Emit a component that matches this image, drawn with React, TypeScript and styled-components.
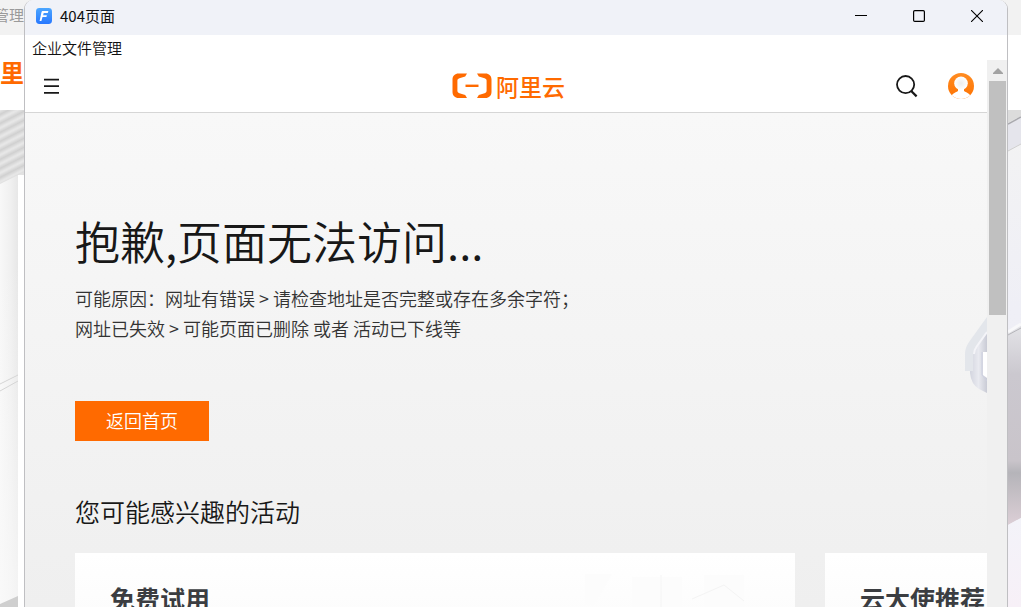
import React from "react";
import styled, { createGlobalStyle } from "styled-components";

const Global = createGlobalStyle`
  * { box-sizing: border-box; }
  body {
    margin: 0;
    background: #f2f2f2;
    font-family: "Noto Sans CJK SC", "Noto Sans", sans-serif;
    color: #181818;
  }
  button { font-family: inherit; border: 0; padding: 0; background: none; cursor: pointer; }
  h1, h2, h3, p { margin: 0; }
  svg { display: block; }
`;

const Desktop = styled.div`
  display: grid;
  grid-template-columns: 24px minmax(0, 1fr) 13px;
  height: 100vh;
  overflow: hidden;
`;

const Backdrop = styled.aside`
  display: flex;
  flex-direction: column;
  min-width: 0;
  overflow: hidden;
`;

const BackdropBar = styled.div`
  display: flex;
  justify-content: flex-end;
  flex: 0 0 35px;
  line-height: 30px;
  font-size: 15px;
  color: #9a9a9a;
  white-space: nowrap;
`;

const BackdropHeader = styled.div`
  display: flex;
  justify-content: flex-end;
  flex: 0 0 75px;
  background: #fff;
  color: #ff6a00;
  font-size: 24px;
  font-weight: 700;
  line-height: 74px;
  white-space: nowrap;
`;

const BackdropArt = styled.svg`
  flex: 0 0 auto;
`;

const Window = styled.section`
  display: flex;
  flex-direction: column;
  min-width: 0;
  overflow: hidden;
  background: #fff;
  border: solid #bfbfc2;
  border-width: 0 1px;
  border-radius: 9px 9px 0 0;
`;

const TitleBar = styled.header`
  display: flex;
  align-items: center;
  flex: 0 0 35px;
  padding: 0 1px 4px 11px;
  gap: 8px;
  background: #f0f2f8;
  font-size: 15px;
  line-height: 20px;
  color: #111;
`;

const WindowTitle = styled.span`
  flex: 1;
`;

const WindowControls = styled.div`
  display: flex;
`;

const WindowButton = styled.button`
  display: grid;
  place-items: center;
  width: 58px;
  height: 31px;
`;

const MenuBar = styled.nav`
  flex: 0 0 25px;
  padding-left: 7px;
  display: flex;
`;

const MenuItem = styled.button`
  font-size: 15px;
  font-weight: 350;
  line-height: 25px;
  color: #111;
`;

const Viewport = styled.div`
  display: flex;
  flex: 1;
  min-height: 0;
`;

const Page = styled.main`
  flex: 1;
  min-width: 0;
  overflow: hidden;
  display: flex;
  flex-direction: column;
`;

const SiteHeader = styled.header`
  display: grid;
  grid-template-columns: 1fr auto 1fr;
  align-items: center;
  flex: 0 0 53px;
  padding: 0 13px 0 18px;
  border-bottom: 1px solid #d6d6d6;
  background: #fff;
`;

const IconButton = styled.button`
  display: block;
`;

const Logo = styled.a`
  display: flex;
  align-items: center;
  gap: 4px;
  color: #ff6a00;
  text-decoration: none;
  font-size: 23px;
  font-weight: 500;
  line-height: 50px;
`;

const HeaderActions = styled.div`
  display: flex;
  align-items: center;
  justify-content: flex-end;
  gap: 30px;
`;

const Hero = styled.div`
  position: relative;
  flex: 1;
  min-height: 0;
  overflow: hidden;
  padding: 94px 0 0 50px;
  background: linear-gradient(#f8f8f8, #efefef);
`;

const HeroArt = styled.svg`
  position: absolute;
  top: 203px;
  right: 0;
`;

const Heading = styled.h1`
  font-size: 45px;
  font-weight: 350;
  line-height: 68px;
`;

const Reason = styled.p`
  padding-top: 8px;
  font-size: 18px;
  font-weight: 350;
  line-height: 30px;
  color: #333;
`;

const HomeButton = styled.button`
  display: block;
  height: 40px;
  margin-top: 58px;
  padding: 0 31px 2px;
  background: #ff6a00;
  color: #fff;
  font-size: 18px;
  font-weight: 350;
  line-height: 38px;
`;

const SectionTitle = styled.h2`
  padding: 50px 0 22px;
  font-size: 25px;
  font-weight: 350;
  line-height: 40px;
`;

const Cards = styled.div`
  display: flex;
  gap: 30px;
  overflow: hidden;
`;

const Card = styled.article`
  position: relative;
  flex: 0 0 720px;
  min-height: 240px;
  padding: 25px 35px;
  background: linear-gradient(#fff, #f3f3f3);
`;

const CardTitle = styled.h3`
  font-size: 25px;
  font-weight: 700;
  line-height: 40px;
  color: #3b3d41;
`;

const CardArt = styled.svg`
  position: absolute;
  top: 18px;
  right: 48px;
`;

const Scrollbar = styled.div`
  flex: 0 0 20px;
  padding: 0 1px 0 2px;
  background: #f0f0f0;
`;

const ScrollUp = styled.button`
  display: grid;
  place-items: center;
  width: 100%;
  height: 21px;
`;

const ScrollThumb = styled.div`
  height: 234px;
  background: #c0c0c0;
`;

const AppIcon = () => (
  <svg width="16" height="16" viewBox="0 0 16 16" aria-hidden="true">
    <defs>
      <linearGradient id="appBlue" x1="0" y1="0" x2="0" y2="1">
        <stop offset="0" stopColor="#4ba6ff" />
        <stop offset="1" stopColor="#2878ff" />
      </linearGradient>
    </defs>
    <rect width="16" height="16" rx="3.4" fill="url(#appBlue)" />
    <path d="M6.4 3H12.4L11.8 5H7.7L7.1 7.2H10.9L10.4 9H6.5L5.4 13H3.6L5.4 4.4Q5.6 3.1 6.4 3Z" fill="#fff" />
  </svg>
);

const LogoMark = () => (
  <svg width="40" height="26" viewBox="0 0 40 26" fill="none" aria-hidden="true">
    <path
      d="M15 .5H6.5C3 .5 .5 3 .5 6.5V19C.5 22.5 3 25 6.5 25H15L13.2 22L7.4 20.2C6 19.8 5.4 19 5.4 17.8V7.7C5.4 6.5 6 5.7 7.4 5.3L13.2 3.5Z"
      fill="#ff6a00"
    />
    <path
      d="M25 .5H33.5C37 .5 39.5 3 39.5 6.5V19C39.5 22.5 37 25 33.5 25H25L26.8 22L32.6 20.2C34 19.8 34.6 19 34.6 17.8V7.7C34.6 6.5 34 5.7 32.6 5.3L26.8 3.5Z"
      fill="#ff6a00"
    />
    <path d="M13.5 12.8H26.5" stroke="#ff6a00" strokeWidth="2.4" />
  </svg>
);

const Avatar = () => (
  <svg width="26" height="26" viewBox="0 0 26 26" aria-hidden="true">
    <defs>
      <clipPath id="avatarClip"><circle cx="13" cy="13" r="13" /></clipPath>
      <radialGradient id="avatarHead">
        <stop offset="0" stopColor="#ececec" />
        <stop offset="1" stopColor="#fff" />
      </radialGradient>
      <linearGradient id="avatarBg" x1="0" y1="0" x2="0" y2="1">
        <stop offset="0" stopColor="#ff8c22" />
        <stop offset="1" stopColor="#ff7200" />
      </linearGradient>
    </defs>
    <g clipPath="url(#avatarClip)">
      <rect width="26" height="26" fill="url(#avatarBg)" />
      <path d="M2 26C3 21 7 19.8 10 18V15H16V18C19 19.8 23 21 24 26Z" fill="#fff" />
      <circle cx="13" cy="10.3" r="6.8" fill="url(#avatarHead)" />
    </g>
  </svg>
);

const LeftArt = () => (
  <BackdropArt width="24" height="497" viewBox="0 0 24 497" aria-hidden="true">
    <defs>
      <linearGradient id="rib" x1="0" y1="0" x2="0" y2="1">
        <stop offset="0" stopColor="#e9e9e9" />
        <stop offset=".5" stopColor="#d0d0d0" />
        <stop offset="1" stopColor="#e9e9e9" />
      </linearGradient>
      <pattern id="ribs" width="24" height="9" patternUnits="userSpaceOnUse" patternTransform="skewY(-27)">
        <rect width="24" height="9" fill="url(#rib)" />
      </pattern>
      <linearGradient id="leftWall">
        <stop offset="0" stopColor="#f8f8f8" />
        <stop offset=".4" stopColor="#f1f1f1" />
        <stop offset="1" stopColor="#e0e0e0" />
      </linearGradient>
      <linearGradient id="leftFade" x1="0" y1="0" x2="0" y2="1">
        <stop offset=".3" stopColor="#fafafa" stopOpacity="0" />
        <stop offset="1" stopColor="#fafafa" stopOpacity=".7" />
      </linearGradient>
    </defs>
    <rect width="24" height="497" fill="url(#leftWall)" />
    <rect width="24" height="497" fill="url(#leftFade)" />
    <path d="M0 0H24V62L0 74Z" fill="url(#ribs)" />
    <path d="M0 274L18 265M0 281L18 271" stroke="#d5d5d5" fill="none" />
    <path d="M0 497V494L18 486V497Z" fill="#cfcfcf" />
    <rect x="18" y="65" width="6" height="432" fill="#fff" />
  </BackdropArt>
);

const RightArt = () => (
  <BackdropArt width="13" height="497" viewBox="0 0 13 497" aria-hidden="true">
    <defs>
      <linearGradient id="rightMid" x1="0" y1="0" x2="0" y2="1">
        <stop offset="0" stopColor="#f3f3f3" />
        <stop offset=".4" stopColor="#efeff6" />
        <stop offset="1" stopColor="#ececf4" />
      </linearGradient>
      <linearGradient id="rightBlock" x1="0" y1="0" x2="0" y2="1">
        <stop offset="0" stopColor="#e4e4e8" />
        <stop offset=".25" stopColor="#cbc8cf" />
        <stop offset=".68" stopColor="#c9c4ca" />
        <stop offset=".74" stopColor="#b5b4b9" />
        <stop offset="1" stopColor="#dccfd6" />
      </linearGradient>
      <linearGradient id="rightFloor" x1="0" y1="0" x2="0" y2="1">
        <stop offset="0" stopColor="#f3f3f9" />
        <stop offset="1" stopColor="#f7f0f7" />
      </linearGradient>
    </defs>
    <rect width="13" height="497" fill="url(#rightMid)" />
    <path d="M0 0H13V6L0 13Z" fill="#dcdcdc" />
    <path d="M0 14L13 7V34L0 41Z" fill="#e5e5ec" />
    <path d="M0 14L13 7" stroke="#a9a9ae" strokeWidth="1.5" />
    <path d="M0 41L13 34" stroke="#cfcfcf" />
    <path d="M0 222L13 214V408L0 415Z" fill="url(#rightBlock)" />
    <path d="M0 222L13 214" stroke="#f8f8fa" strokeWidth="3" />
    <path d="M0 225L13 218" stroke="#b5b5ba" />
    <path d="M0 415L13 408V497H0Z" fill="url(#rightFloor)" />
  </BackdropArt>
);

export default function App() {
  return (
    <>
      <Global />
      <Desktop>
        <Backdrop>
          <BackdropBar>管理</BackdropBar>
          <BackdropHeader>里</BackdropHeader>
          <LeftArt />
        </Backdrop>

        <Window>
          <TitleBar>
            <AppIcon />
            <WindowTitle>404页面</WindowTitle>
            <WindowControls>
              <WindowButton aria-label="最小化">
                <svg width="12" height="12" viewBox="0 0 12 12" stroke="#000" fill="none"><path d="M0 5.5H12" /></svg>
              </WindowButton>
              <WindowButton aria-label="最大化">
                <svg width="12" height="12" viewBox="0 0 12 12" stroke="#000" strokeWidth="1.2" fill="none">
                  <rect x=".6" y=".6" width="10.8" height="10.8" rx="1.2" />
                </svg>
              </WindowButton>
              <WindowButton aria-label="关闭">
                <svg width="12" height="12" viewBox="0 0 12 12" stroke="#000" strokeWidth="1.1" fill="none">
                  <path d="M0 0L12 12M12 0L0 12" />
                </svg>
              </WindowButton>
            </WindowControls>
          </TitleBar>

          <MenuBar>
            <MenuItem>企业文件管理</MenuItem>
          </MenuBar>

          <Viewport>
            <Page>
              <SiteHeader>
                <IconButton aria-label="菜单">
                  <svg width="16" height="16" viewBox="0 0 16 16" stroke="#181818" strokeWidth="1.8" fill="none">
                    <path d="M1 1.6H16M1 8.2H16M1 14.8H16" />
                  </svg>
                </IconButton>
                <Logo href="#">
                  <LogoMark />
                  阿里云
                </Logo>
                <HeaderActions>
                  <IconButton aria-label="搜索">
                    <svg width="22" height="24" viewBox="0 0 22 24" stroke="#181818" strokeWidth="1.8" fill="none">
                      <circle cx="9.6" cy="10.6" r="8.6" />
                      <path d="M15.2 17L20.6 22.4" strokeWidth="2.2" />
                    </svg>
                  </IconButton>
                  <IconButton aria-label="账号">
                    <Avatar />
                  </IconButton>
                </HeaderActions>
              </SiteHeader>

              <Hero>
                <HeroArt width="22" height="78" viewBox="0 0 22 78" aria-hidden="true">
                  <defs>
                    <linearGradient id="shell">
                      <stop offset="0" stopColor="#d3d5df" />
                      <stop offset=".5" stopColor="#e9eaf0" />
                      <stop offset="1" stopColor="#c9cbd5" />
                    </linearGradient>
                  </defs>
                  <path d="M5 52V57Q6 68 14 73L22 77V16L8 34Z" fill="url(#shell)" />
                  <path d="M22 1L4 26Q0 32 0 38V55H8V39Q8 34 11 30L22 16Z" fill="#e3e6eb" />
                  <path d="M22 16L12 30Q9 34 9 38" stroke="#f4f4f8" strokeWidth="2" fill="none" />
                  <path d="M18 36H22V62L18 59Z" fill="#fff" />
                  <path d="M17 36V59L22 65" stroke="#cdd0e0" fill="none" />
                </HeroArt>
                <Heading>抱歉,页面无法访问...</Heading>
                <Reason>
                  可能原因：网址有错误 &gt; 请检查地址是否完整或存在多余字符；
                  <br />
                  网址已失效 &gt; 可能页面已删除 或者 活动已下线等
                </Reason>
                <HomeButton>返回首页</HomeButton>
                <SectionTitle>您可能感兴趣的活动</SectionTitle>
                <Cards>
                  <Card>
                    <CardTitle>免费试用</CardTitle>
                    <CardArt width="165" height="60" viewBox="0 0 165 60" aria-hidden="true" fill="none">
                      <path d="M3 3H30L12 34H3ZM50 6H78V60H50ZM80 6H100V60H80ZM122 4H162V60H122Z" fill="#fcfcfc" />
                      <path d="M79 4V60M110 28L142 14L162 30" stroke="#f4f4f4" />
                    </CardArt>
                  </Card>
                  <Card>
                    <CardTitle>云大使推荐</CardTitle>
                  </Card>
                </Cards>
              </Hero>
            </Page>
            <Scrollbar>
              <ScrollUp aria-label="向上滚动">
                <svg width="10" height="6" viewBox="0 0 10 6"><path d="M5 0L10 5V6H0V5Z" fill="#a3a3a3" /></svg>
              </ScrollUp>
              <ScrollThumb />
            </Scrollbar>
          </Viewport>
        </Window>

        <Backdrop>
          <BackdropBar />
          <BackdropHeader />
          <RightArt />
        </Backdrop>
      </Desktop>
    </>
  );
}
